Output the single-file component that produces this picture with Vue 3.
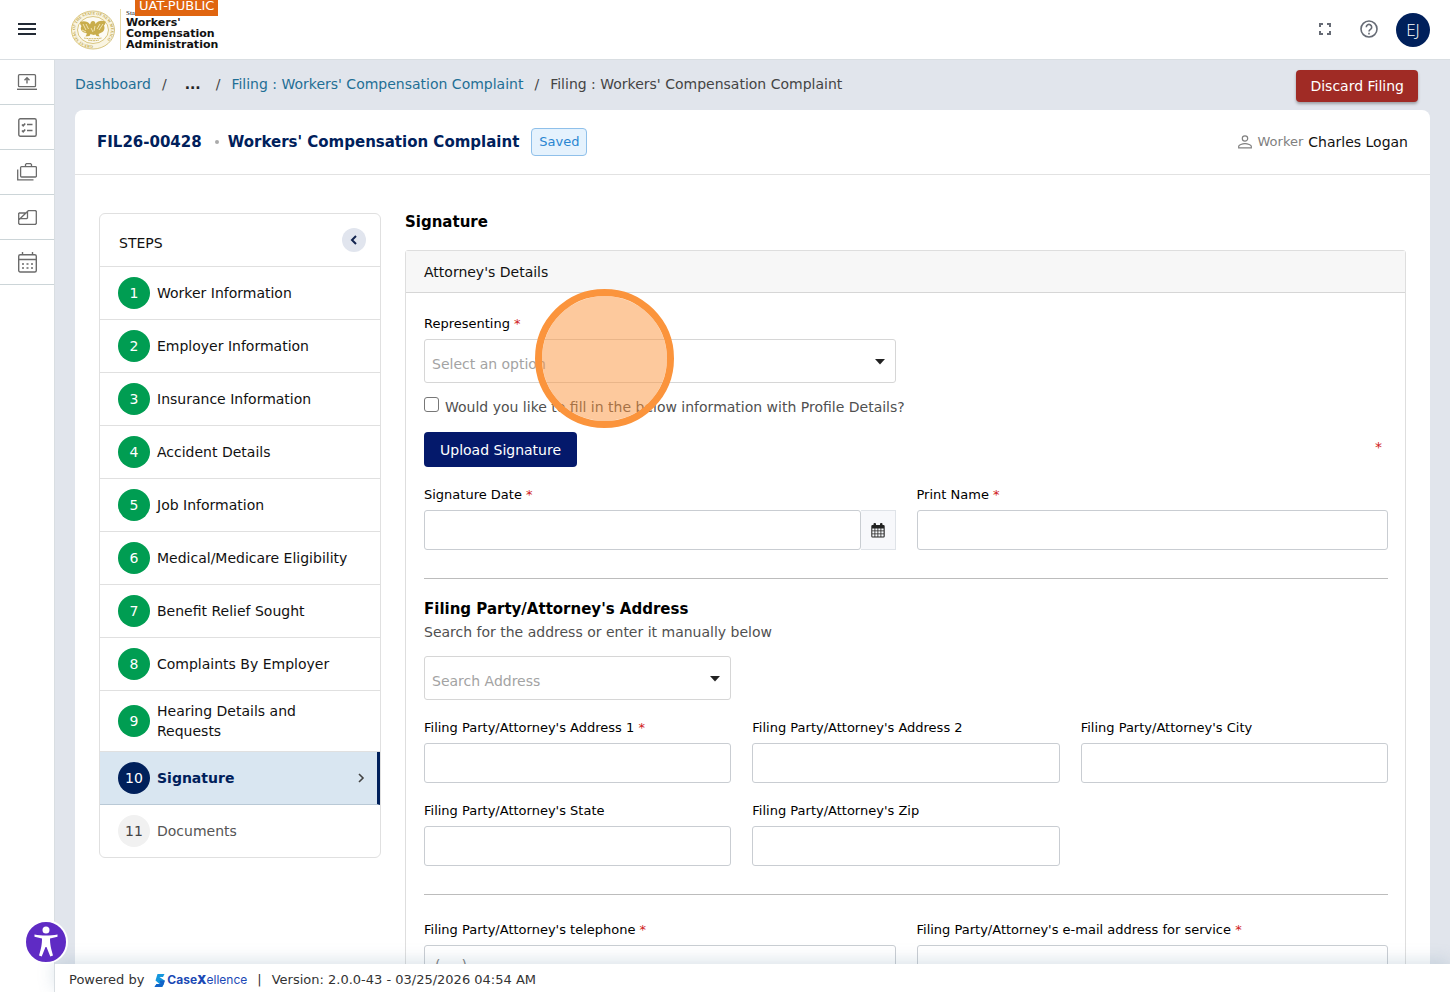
<script setup>
import { ref } from 'vue'

const steps = [
  'Worker Information',
  'Employer Information',
  'Insurance Information',
  'Accident Details',
  'Job Information',
  'Medical/Medicare Eligibility',
  'Benefit Relief Sought',
  'Complaints By Employer',
  'Hearing Details and Requests',
  'Signature',
  'Documents',
]
const current = ref(10)

const stepState = (n) => (n < current.value ? 'done' : n === current.value ? 'active' : 'todo')

const addressFields = [
  { id: 'addr1', label: "Filing Party/Attorney's Address 1", required: true },
  { id: 'addr2', label: "Filing Party/Attorney's Address 2" },
  { id: 'city', label: "Filing Party/Attorney's City" },
  { id: 'state', label: "Filing Party/Attorney's State" },
  { id: 'zip', label: "Filing Party/Attorney's Zip" },
]
</script>

<template>
  <div class="app">
    <header class="topbar">
      <button class="icon-btn menu" aria-label="Menu">
        <svg width="18" height="14" viewBox="0 0 18 14"><path d="M0 2h18M0 7h18M0 12h18" stroke="#222a35" stroke-width="2" /></svg>
      </button>
      <a class="brand" href="#">
        <svg class="seal" width="46" height="40" viewBox="0 0 46 40" fill="none">
          <defs><path id="ring" d="M23 35.500A18 15.500 0 0 1 23 4.500A18 15.500 0 0 1 23 35.500" /></defs>
          <ellipse cx="23" cy="20" rx="21.500" ry="19" fill="#faf5e2" stroke="#d9c681" stroke-width="1" />
          <ellipse cx="23" cy="20" rx="15.500" ry="13.500" fill="#fdfbf3" stroke="#d9c681" stroke-width="1" />
          <text font-family="Liberation Serif, serif" font-size="4" font-weight="700" fill="#c0a648"><textPath href="#ring">GREAT SEAL OF THE STATE OF NEW MEXICO</textPath></text>
          <path d="M21 12c1-1.500 3-1.500 4 0l.5 2c2-3 6-4 10-2.500 0 2-.5 3-1.500 4 1 2 .5 5-1.500 6.500l-4 2 1 2.500-3-.5-1-1.500-2 .5-3-1-1 2-4 .5 1.500-3-3-1c-3-1.500-4-4-2.500-6.500-1-1-1.500-2-1.500-4 4-1.500 8-.5 10 2.500z" fill="#c9ad4c" />
          <path d="M13 14l3 6M16 14l2.500 5M33 14l-4 6M30 14l-3 5M21 18l2 4M25 16l-1 5M12 20l4 2" stroke="#f0e3b0" stroke-width="1" />
          <path d="M14 28c5 1 12 1 18 0M18 30c3 1 8 1 11 0" stroke="#d2bb6c" stroke-width="1" stroke-dasharray="2 .5" />
        </svg>
        <span class="brand-name">
          <small>Sta</small>
          <strong>Workers'<br />Compensation<br />Administration</strong>
        </span>
        <span class="env">UAT-PUBLIC</span>
      </a>
      <div class="tools">
        <button class="icon-btn" aria-label="Full screen">
          <svg width="12" height="12" viewBox="0 0 12 12" fill="none" stroke="#666b75" stroke-width="2"><path d="M1 4V1h3M8 1h3v3M11 8v3H8M4 11H1V8" /></svg>
        </button>
        <button class="icon-btn help" aria-label="Help">
          <svg width="18" height="18" viewBox="0 0 18 18" fill="none" stroke="#666b75" stroke-width="1.600"><circle cx="9" cy="9" r="8" /><path d="M6.300 7.300a2.700 2.700 0 1 1 4.200 2.100C9.500 10.100 9 10.500 9 11.600" /><path d="M9 12.800v1.700" /></svg>
        </button>
        <button class="avatar">EJ</button>
      </div>
    </header>

    <div class="body">
      <nav class="rail">
        <a href="#" aria-label="File online">
          <svg width="20" height="16" viewBox="0 0 20 16" fill="none" stroke="#6b6b6b"><rect x="1.500" y=".7" width="17" height="12" rx="1" stroke-width="1.300" /><path d="M0 15.300h20" stroke-width="1.400" /><path d="M10 9.500V4M7.500 6.300L10 3.800l2.500 2.500" stroke-width="1.400" /></svg>
        </a>
        <a href="#" aria-label="Tasks">
          <svg width="19" height="19" viewBox="0 0 19 19" fill="none" stroke="#6b6b6b" stroke-width="1.400"><rect x=".8" y=".8" width="17.400" height="17.400" rx="1.500" /><path d="M9 6.500h5.500M9 12.500h5.500" /><path d="M4 6.500l1.200 1.200L7.200 5.500M4 12.500l1.200 1.200 2-2.200" stroke-width="1.700" /></svg>
        </a>
        <a href="#" aria-label="Cases">
          <svg width="20" height="18" viewBox="0 0 20 18" fill="none" stroke="#6b6b6b" stroke-width="1.300"><rect x="3.600" y="3.600" width="15.800" height="10.400" rx="1" /><path d="M8.500 3.500V1.500l1-.9h4l1 .9v2M.7 6.500v10.300H16.500" /></svg>
        </a>
        <a href="#" aria-label="Documents">
          <svg width="19" height="15" viewBox="0 0 19 15" fill="none" stroke="#6b6b6b" stroke-width="1.300"><path d="M.7 3v10.400l.8.900h16l.8-.9V1.400l-.8-.7h-7.200L1.200 9.500M.7 3h7.300M9.500 1.500v6.400l-.8.700H1" /></svg>
        </a>
        <a href="#" aria-label="Calendar">
          <svg width="19" height="21" viewBox="0 0 19 21" fill="none" stroke="#6b6b6b" stroke-width="1.400"><rect x=".7" y="2.700" width="17.600" height="17.300" rx="1.500" /><path d="M.7 7.500h17.600M4.500 0v3M14.500 0v3" /><path d="M4 12h11M4 16h11" stroke-width="1.600" stroke-dasharray="2 2.500" /></svg>
        </a>
      </nav>

      <main class="main">
        <div class="crumb-row">
          <nav class="crumbs">
            <a href="#">Dashboard</a><span>/</span><button class="more">...</button><span>/</span>
            <a href="#">Filing : Workers' Compensation Complaint</a><span>/</span>
            <em>Filing : Workers' Compensation Complaint</em>
          </nav>
          <button class="discard">Discard Filing</button>
        </div>

        <section class="card">
          <header class="card-head">
            <h1>FIL26-00428</h1>
            <i class="dot"></i>
            <h1>Workers' Compensation Complaint</h1>
            <span class="tag">Saved</span>
            <div class="worker">
              <svg width="14" height="14" viewBox="0 0 14 14" fill="none" stroke="#808080" stroke-width="1.200"><circle cx="7" cy="3.500" r="2.700" /><path d="M.7 12.800v-1.500c0-1.400 3.500-2.600 6.300-2.600s6.300 1.200 6.300 2.600v1.500z" /></svg>
              <span>Worker</span><b>Charles Logan</b>
            </div>
          </header>

          <div class="card-body">
            <aside class="steps">
              <div class="steps-head">
                <h2>STEPS</h2>
                <button class="collapse" aria-label="Collapse steps">
                  <svg width="8" height="10" viewBox="0 0 8 10" fill="none" stroke="#12244f" stroke-width="2"><path d="M6 1L2 5l4 4" /></svg>
                </button>
              </div>
              <button v-for="(s, i) in steps" :key="s" class="step" :class="stepState(i + 1)" @click="current = i + 1">
                <span class="num">{{ i + 1 }}</span>
                <span class="name">{{ s }}</span>
                <svg v-if="i + 1 === current" width="8" height="10" viewBox="0 0 8 10" fill="none" stroke="#444" stroke-width="1.600"><path d="M2 1l4 4-4 4" /></svg>
              </button>
            </aside>

            <form class="form" @submit.prevent>
              <h2 class="form-title">Signature</h2>
              <div class="panel">
                <h3 class="panel-head">Attorney's Details</h3>
                <div class="panel-body">
                  <div class="grid two">
                    <div class="field">
                      <label for="rep">Representing <i>*</i></label>
                      <div class="select">
                        <select id="rep"><option>Select an option</option></select>
                        <svg width="10" height="6" viewBox="0 0 10 6"><path d="M0 0h10L5 5.500z" fill="#222" /></svg>
                        <div class="pointer-ring"></div>
                      </div>
                    </div>
                  </div>
                  <div class="check">
                    <input id="profile" type="checkbox" />
                    <label for="profile">Would you like to fill in the below information with Profile Details?</label>
                  </div>
                  <div class="upload-row">
                    <button class="upload">Upload Signature</button>
                    <i>*</i>
                  </div>
                  <div class="grid two">
                    <div class="field">
                      <label for="date">Signature Date <i>*</i></label>
                      <div class="date">
                        <input id="date" type="text" />
                        <button aria-label="Pick a date">
                          <svg width="14" height="15" viewBox="0 0 14 15"><path d="M1.500 2h11A1.200 1.200 0 0 1 13.700 3.200v10a1.200 1.200 0 0 1-1.200 1.200h-11A1.200 1.200 0 0 1 .3 13.200v-10A1.200 1.200 0 0 1 1.500 2z" fill="#222" /><rect x="2.500" y="0" width="2.500" height="3.500" rx="1" fill="#222" /><rect x="9" y="0" width="2.500" height="3.500" rx="1" fill="#222" /><path d="M1.300 5.500h2.200v2H1.300zM4.300 5.500h2.200v2H4.300zM7.300 5.500h2.200v2H7.300zM10.300 5.500h2.300v2h-2.300zM1.300 8.300h2.200v2.200H1.300zM4.300 8.300h2.200v2.200H4.300zM7.300 8.300h2.200v2.200H7.300zM10.300 8.300h2.300v2.200h-2.300zM1.300 11.300h2.200v2.100H1.300zM4.300 11.300h2.200v2.100H4.300zM7.300 11.300h2.200v2.100H7.300zM10.300 11.300h2.300v2.100h-2.300z" fill="#f5f7fa" /></svg>
                        </button>
                      </div>
                    </div>
                    <div class="field">
                      <label for="pname">Print Name <i>*</i></label>
                      <input id="pname" type="text" />
                    </div>
                  </div>
                  <hr />
                  <h4>Filing Party/Attorney's Address</h4>
                  <p class="hint">Search for the address or enter it manually below</p>
                  <div class="grid three">
                    <div class="select first">
                      <select id="search" aria-label="Search Address"><option>Search Address</option></select>
                      <svg width="10" height="6" viewBox="0 0 10 6"><path d="M0 0h10L5 5.500z" fill="#222" /></svg>
                    </div>
                    <div v-for="f in addressFields" :key="f.id" class="field" :class="{ first: f.required }">
                      <label :for="f.id">{{ f.label }} <i v-if="f.required">*</i></label>
                      <input :id="f.id" type="text" />
                    </div>
                  </div>
                  <hr />
                  <div class="grid two contact">
                    <div class="field">
                      <label for="tel">Filing Party/Attorney's telephone <i>*</i></label>
                      <input id="tel" type="tel" placeholder="(___) ___-____" />
                    </div>
                    <div class="field">
                      <label for="mail">Filing Party/Attorney's e-mail address for service <i>*</i></label>
                      <input id="mail" type="email" />
                    </div>
                  </div>
                </div>
              </div>
            </form>
          </div>
        </section>
      </main>
    </div>

    <footer class="footer">
      <span>Powered by</span>
      <a class="cx" href="#">
        <svg width="12" height="13" viewBox="0 0 11 13"><path d="M3 0h7L8.500 3H5l5 3.500L8 13H0l2-3h3L1 6.500z" fill="#1597dd" /><path d="M5 6.500h5.500L9 11l-2 2H0l2-3h4z" fill="#1263c8" /></svg>
        <span><b>Case</b><b class="x">X</b>ellence</span>
      </a>
      <span>|</span>
      <span>Version: 2.0.0-43 - 03/25/2026 04:54 AM</span>
    </footer>

    <button class="a11y" aria-label="Accessibility">
      <svg width="26" height="32" viewBox="0 0 26 32" fill="#fff"><circle cx="13" cy="4" r="3.500" /><path d="M1.500 8.500c7 1.300 16 1.300 23 0v2.200L17 12.500c0 6 1 10 3 17l-2.700 1L13.500 21h-1L8.700 30.500l-2.700-1c2-7 3-11 3-17L1.500 10.700z" /></svg>
    </button>
  </div>
</template>

<style>
html,
body {
  margin: 0;
  background: #fff;
}
</style>

<style scoped>
* {
  box-sizing: border-box;
}
.app {
  position: relative;
  display: flex;
  flex-direction: column;
  height: 100vh;
  overflow: hidden;
  font-family: Verdana, 'DejaVu Sans', sans-serif;
  font-size: 14px;
  line-height: 20px;
  color: #111;
}
button,
input,
select {
  font: inherit;
  color: inherit;
  margin: 0;
}
button {
  border: 0;
  padding: 0;
  background: none;
  cursor: pointer;
}
a {
  text-decoration: none;
  color: inherit;
}
svg {
  display: block;
  flex: none;
}
h1, h2, h3, h4, p {
  margin: 0;
  font-size: inherit;
}
i, em {
  font-style: normal;
}

.topbar {
  flex: none;
  display: flex;
  align-items: center;
  height: 60px;
  padding: 0 20px 0 18px;
  border-bottom: 1px solid #d9dee2;
}
.icon-btn {
  display: flex;
  padding-bottom: 2px;
}
.brand {
  position: relative;
  display: flex;
  align-items: center;
  gap: 4px;
  margin-left: 34px;
  height: 60px;
}
.brand-name {
  border-left: 1px solid #e6d9a8;
  padding-left: 5px;
  color: #111;
}
.brand-name small {
  display: block;
  font-family: 'Liberation Serif', serif;
  font-size: 7px;
  line-height: 8px;
}
.brand-name strong {
  display: block;
  font-size: 11px;
  line-height: 11px;
}
.env {
  position: absolute;
  top: -4px;
  right: 0;
  padding: 0 4px;
  font-size: 13px;
  background: #e06510;
  color: #fff;
}
.tools {
  display: flex;
  align-items: center;
  margin-left: auto;
}
.help {
  margin: 0 18px 0 29px;
}
.avatar {
  width: 34px;
  height: 34px;
  border-radius: 50%;
  background: #00205b;
  color: #fff;
  font-family: 'Open Sans', sans-serif;
  font-size: 17px;
  font-weight: 300;
}

.body {
  flex: 1;
  min-height: 0;
  display: flex;
}
.rail {
  flex: none;
  width: 55px;
  border-right: 1px solid #d9dee2;
  background: #fff;
}
.rail a {
  display: flex;
  align-items: center;
  justify-content: center;
  height: 45px;
  border-bottom: 1px solid #ccd5d8;
}
.main {
  flex: 1;
  min-width: 0;
  overflow: hidden;
  padding: 0 20px;
  background: #e1e5ec;
}
.crumb-row {
  display: flex;
  align-items: center;
  justify-content: space-between;
  height: 50px;
  padding-right: 12px;
}
.crumbs {
  display: flex;
  gap: 11px;
  padding-bottom: 2px;
  color: #444;
}
.crumbs a {
  color: #1f6f95;
}
.more {
  padding: 0 4px 0 7px;
  font-weight: 700;
  color: #222;
}
.discard {
  height: 32px;
  margin-top: 2px;
  padding: 0 14px;
  border-radius: 4px;
  background: #a02b25;
  color: #fff;
  box-shadow: 0 2px 3px rgba(0, 0, 0, 0.3);
}

.card {
  background: #fff;
  border-radius: 8px 8px 0 0;
}
.card-head {
  display: flex;
  align-items: center;
  height: 65px;
  padding: 0 22px;
  border-bottom: 1px solid #e2e2e2;
}
.card-head h1 {
  font-size: 15px;
  color: #00205b;
}
.dot {
  width: 4px;
  height: 4px;
  margin: 0 9px 0 13px;
  border-radius: 50%;
  background: #aaa;
}
.tag {
  margin-left: 12px;
  padding: 3px 7px;
  border: 1px solid #8fc0ea;
  border-radius: 4px;
  background: #e5f2fd;
  color: #2a86d1;
  font-size: 13px;
}
.worker {
  display: flex;
  align-items: center;
  gap: 5px;
  margin-left: auto;
}
.worker span {
  font-size: 13px;
  color: #808080;
}
.worker b {
  font-weight: 400;
}
.card-body {
  display: flex;
  align-items: flex-start;
  gap: 24px;
  padding: 38px 24px 24px;
}

.steps {
  flex: none;
  width: 282px;
  border: 1px solid #e0e0e0;
  border-radius: 6px;
  overflow: hidden;
}
.steps-head {
  display: flex;
  justify-content: space-between;
  align-items: center;
  height: 53px;
  padding: 0 14px 0 19px;
  border-bottom: 1px solid #e0e0e0;
}
.steps-head h2 {
  padding-top: 6px;
  font-weight: 400;
}
.collapse {
  display: flex;
  align-items: center;
  justify-content: center;
  width: 24px;
  height: 24px;
  border-radius: 50%;
  background: #e1e5ee;
}
.step {
  display: flex;
  align-items: center;
  gap: 7px;
  width: 100%;
  padding: 10px 16px 10px 18px;
  border-bottom: 1px solid #e0e0e0;
  text-align: left;
}
.step:last-child {
  border-bottom: 0;
}
.num {
  flex: none;
  width: 32px;
  line-height: 32px;
  border-radius: 50%;
  text-align: center;
  color: #fff;
  background: #009d52;
}
.name {
  flex: 1;
}
.active {
  padding-right: 12px;
  border-right: 3px solid #00205b;
  border-bottom-color: #b9c9d6;
  background: #d9e6f1;
  color: #00205b;
}
.active .name {
  font-weight: 700;
}
.active .num {
  background: #00205b;
}
.todo {
  color: #555;
}
.todo .num {
  background: #f1f1f1;
  color: #444;
}

.form {
  flex: 1;
  min-width: 0;
}
.form-title {
  margin-bottom: 19px;
  font-size: 15px;
  line-height: 18px;
  color: #000;
}
.panel {
  border: 1px solid #dedede;
  border-radius: 3px 3px 0 0;
}
.panel-head {
  padding: 11px 18px 10px;
  border-bottom: 1px solid #d6d6d6;
  background: #f7f7f7;
  font-weight: 400;
}
.panel-body {
  padding: 21px 17px 20px 18px;
}
.grid {
  display: grid;
  column-gap: 21px;
  row-gap: 18px;
}
.two {
  grid-template-columns: 1fr 1fr;
}
.three {
  grid-template-columns: 1fr 1fr 1fr;
}
.first {
  grid-column-start: 1;
}
.contact {
  padding-top: 5px;
}
.field {
  display: flex;
  flex-direction: column;
  gap: 5px;
}
.field label {
  font-size: 13px;
  color: #000;
}
.field i,
.upload-row i {
  color: #d02020;
}
.field input {
  width: 100%;
  height: 40px;
  padding: 0 10px;
  border: 1px solid #c9cdd2;
  border-radius: 3px;
  background: #fff;
}
.field input::placeholder {
  color: #777;
}
.select {
  position: relative;
  display: flex;
  align-items: center;
}
.select select {
  flex: 1;
  height: 44px;
  padding: 6px 30px 0 7px;
  border: 1px solid #d6d6d6;
  border-radius: 3px;
  background: #fff;
  color: #a3a3a3;
  appearance: none;
}
.select svg {
  position: absolute;
  top: 20px;
  right: 11px;
}
.pointer-ring {
  position: absolute;
  left: 111px;
  top: -50px;
  width: 139px;
  height: 139px;
  border: 7px solid #fb943c;
  border-radius: 50%;
  background: rgba(251, 148, 60, 0.5);
  background-clip: padding-box;
  pointer-events: none;
}
.check {
  display: flex;
  gap: 6px;
  margin: 14px 0 15px;
  color: #505050;
}
.check input {
  flex: none;
  width: 15px;
  height: 15px;
  border: 1px solid #777;
  border-radius: 3px;
  appearance: none;
  background: #fff;
}
.upload-row {
  display: flex;
  justify-content: space-between;
  margin-bottom: 18px;
  padding-right: 6px;
}
.upload-row i {
  padding-top: 5px;
}
.upload {
  height: 35px;
  padding: 0 16px;
  border-radius: 4px;
  background: #04196b;
  color: #fff;
}
.date {
  display: flex;
}
.date input {
  flex: 1;
  min-width: 0;
}
.date button {
  display: flex;
  align-items: center;
  justify-content: center;
  width: 35px;
  border: 1px solid #dfe3e8;
  border-left: 0;
  background: #f7f8fb;
}
hr {
  margin: 28px 0 20px;
  border: 0;
  border-top: 1px solid #bcbcbc;
}
h4 {
  font-size: 15px;
  color: #000;
}
.hint {
  margin: 3px 0 14px;
  color: #505050;
}

.footer {
  position: relative;
  flex: none;
  display: flex;
  align-items: center;
  gap: 10px;
  height: 28px;
  margin-left: 54px;
  padding: 4px 14px 0;
  border-left: 1px solid #d9dee2;
  background: #fff;
  font-size: 13px;
  color: #333;
  box-shadow: 0 -4px 16px rgba(120, 150, 175, 0.25);
}
.cx {
  display: flex;
  align-items: center;
  gap: 1px;
  font-family: Inter, sans-serif;
  font-size: 12px;
  color: #1b49b5;
}
.cx .x {
  font-weight: 900;
}
.a11y {
  position: absolute;
  left: 24px;
  bottom: 28px;
  display: flex;
  align-items: center;
  justify-content: center;
  width: 44px;
  height: 44px;
  border: 2px solid #fff;
  border-radius: 50%;
  background: #5f2bc4;
}
</style>
